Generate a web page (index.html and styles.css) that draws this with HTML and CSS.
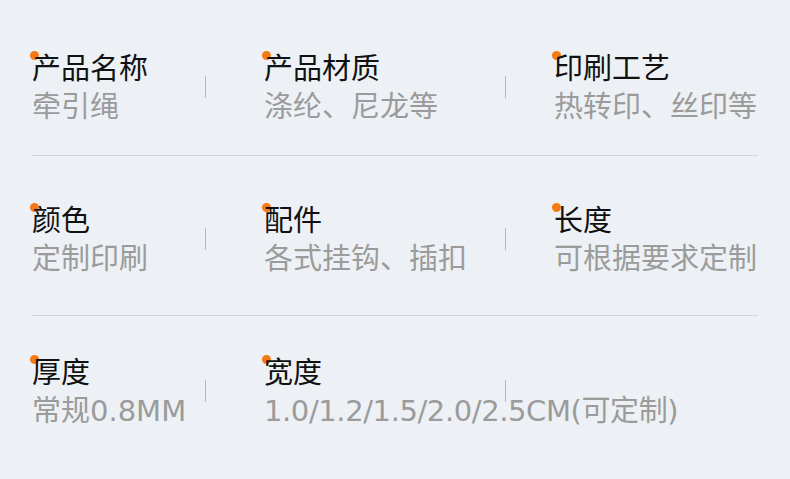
FILE: index.html
```html
<!DOCTYPE html>
<html lang="zh-CN">
<head>
    <meta charset="UTF-8">
    <meta name="viewport" content="width=device-width, initial-scale=1.0">
    <title>产品参数</title>
    <link rel="stylesheet" href="styles.css">
</head>
<body>
    <div class="specs">
        <div class="row row-first">
            <div class="cell">
                <div class="text">
                    <div class="label">产品名称</div>
                    <div class="value">牵引绳</div>
                </div>
                <span class="sep"></span>
            </div>
            <div class="cell">
                <div class="text">
                    <div class="label">产品材质</div>
                    <div class="value">涤纶、尼龙等</div>
                </div>
                <span class="sep"></span>
            </div>
            <div class="cell">
                <div class="text">
                    <div class="label">印刷工艺</div>
                    <div class="value">热转印、丝印等</div>
                </div>
            </div>
        </div>
        <div class="divider"></div>
        <div class="row row-mid">
            <div class="cell">
                <div class="text">
                    <div class="label">颜色</div>
                    <div class="value">定制印刷</div>
                </div>
                <span class="sep"></span>
            </div>
            <div class="cell">
                <div class="text">
                    <div class="label">配件</div>
                    <div class="value">各式挂钩、插扣</div>
                </div>
                <span class="sep"></span>
            </div>
            <div class="cell">
                <div class="text">
                    <div class="label">长度</div>
                    <div class="value">可根据要求定制</div>
                </div>
            </div>
        </div>
        <div class="divider"></div>
        <div class="row row-last">
            <div class="cell">
                <div class="text">
                    <div class="label">厚度</div>
                    <div class="value">常规0.8MM</div>
                </div>
                <span class="sep"></span>
            </div>
            <div class="cell">
                <div class="text">
                    <div class="label">宽度</div>
                    <div class="value value-long">1.0/1.2/1.5/2.0/2.5CM(可定制)</div>
                </div>
                <span class="sep"></span>
            </div>
            <div class="cell"></div>
        </div>
    </div>
</body>
</html>
```

FILE: styles.css
```css
html, body {
    margin: 0;
    padding: 0;
}
body {
    background: #edf1f5;
    font-family: "Noto Sans CJK SC", "Noto Sans", sans-serif;
    width: 790px;
    height: 479px;
    overflow: hidden;
}
.specs {
    margin: 0 32px;
    padding-top: 45px;
}
.row {
    display: grid;
    grid-template-columns: 174px 300px 1fr;
}
.row-first {
    padding-bottom: 28px;
}
.row-mid {
    padding-top: 41px;
    padding-bottom: 36px;
}
.row-last {
    padding-top: 33px;
}
.divider {
    height: 1px;
    background: #cfd4da;
}
.cell {
    display: flex;
    align-items: center;
}
.cell:nth-child(2) {
    padding-left: 58px;
}
.cell:nth-child(3) {
    padding-left: 48px;
}
.text {
    flex: 1;
    min-width: 0;
    white-space: nowrap;
    font-size: 29px;
}
.label {
    position: relative;
    color: #111;
    line-height: 42px;
}
.label::before {
    content: "";
    position: absolute;
    left: -2px;
    top: 6px;
    width: 9px;
    height: 9px;
    border-radius: 50%;
    background: #f47a16;
    z-index: -1;
}
.value {
    font-family: "DejaVu Sans", "Noto Sans CJK SC", sans-serif;
    color: #9b9b9b;
    line-height: 40px;
}
.value-long {
    letter-spacing: -0.4px;
}
.sep {
    position: relative;
    width: 1px;
    height: 22px;
    background: #b4b7bb;
    margin-top: 2px;
}
```
